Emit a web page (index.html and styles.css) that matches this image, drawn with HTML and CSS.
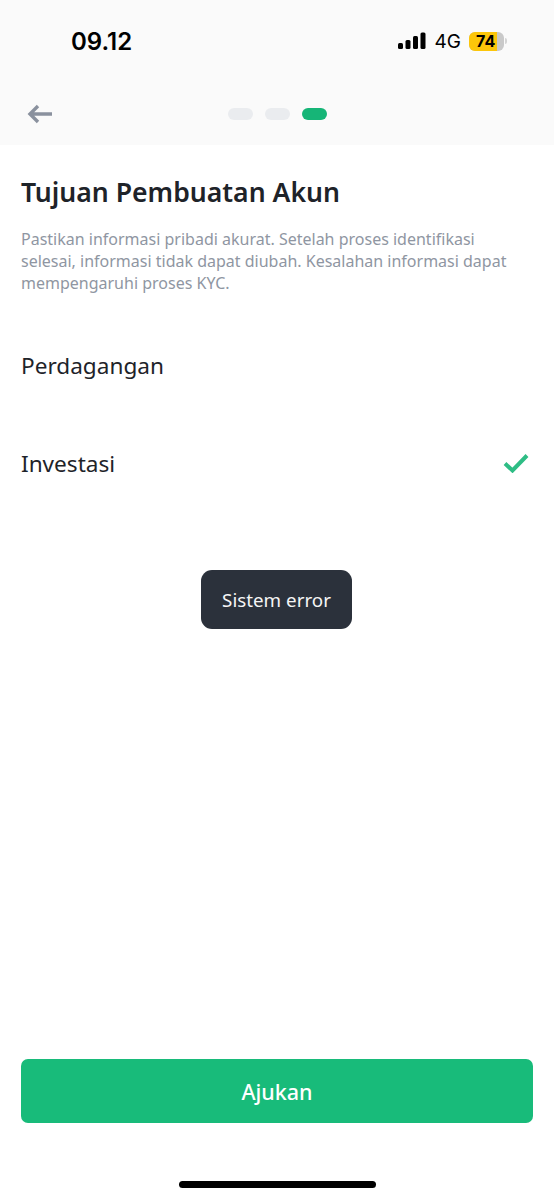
FILE: index.html
```html
<!DOCTYPE html>
<html>
<head>
    <title>Tujuan Pembuatan Akun</title>
    <link rel="stylesheet" href="styles.css">
</head>
<body>
    <div class="screen">
        <header class="top">
            <div class="status-bar">
                <span class="time">09.12</span>
                <div class="status-icons">
                    <svg class="signal" width="28" height="18" viewBox="0 0 28 18">
                        <rect x="0" y="11" width="5" height="6" rx="1.5"/>
                        <rect x="7.5" y="8" width="5" height="9" rx="1.5"/>
                        <rect x="15" y="4" width="5" height="13" rx="1.5"/>
                        <rect x="22.5" y="0.5" width="5" height="16.5" rx="1.5"/>
                    </svg>
                    <span class="network">4G</span>
                    <div class="battery">
                        <span class="battery-level">74</span>
                    </div>
                    <span class="battery-cap"></span>
                </div>
            </div>
            <nav class="nav-bar">
                <svg class="back" width="26" height="20" viewBox="0 0 26 20">
                    <path d="M25 10H3M11 2l-8 8 8 8" fill="none" stroke="#8a919e" stroke-width="3.4"/>
                </svg>
                <div class="steps">
                    <span class="step"></span>
                    <span class="step"></span>
                    <span class="step active"></span>
                </div>
            </nav>
        </header>
        <main class="content">
            <h1>Tujuan Pembuatan Akun</h1>
            <p class="intro">Pastikan informasi pribadi akurat. Setelah proses identifikasi selesai, informasi tidak dapat diubah. Kesalahan informasi dapat mempengaruhi proses KYC.</p>
            <div class="options">
                <div class="option">Perdagangan</div>
                <div class="option">
                    Investasi
                    <svg width="26" height="20" viewBox="0 0 26 20">
                        <path d="M2 10.500l7.500 7L24 2.500" fill="none" stroke="#2ebd85" stroke-width="4"/>
                    </svg>
                </div>
            </div>
        </main>
        <footer class="bottom">
            <button class="submit">Ajukan</button>
            <div class="home-bar"></div>
        </footer>
        <div class="toast">Sistem error</div>
    </div>
</body>
</html>
```

FILE: styles.css
```css
body {
    margin: 0;
    background-color: #fff;
    font-family: "Noto Sans", sans-serif;
    color: #1e2329;
}
.screen {
    position: relative;
    display: flex;
    flex-direction: column;
    height: 1200px;
    overflow: hidden;
}
.top {
    height: 145px;
    background-color: #fafafa;
}
.status-bar {
    display: flex;
    justify-content: space-between;
    align-items: center;
    height: 82px;
    padding: 0 47px 0 71px;
}
.time {
    font-family: Inter, sans-serif;
    font-size: 24px;
    font-weight: 600;
    color: #000;
}
.status-icons {
    display: flex;
    align-items: center;
}
.signal {
    fill: #000;
    margin-right: 9px;
}
.network {
    font-family: Inter, sans-serif;
    font-size: 19px;
    font-weight: 400;
    color: #000;
    margin-right: 8px;
}
.battery {
    width: 35px;
    height: 19px;
    border-radius: 6px;
    overflow: hidden;
    background-color: #c9c9c9;
}
.battery-level {
    display: block;
    width: 28px;
    height: 19px;
    padding-left: 7px;
    box-sizing: border-box;
    background-color: #fcc60a;
    font-family: Inter, sans-serif;
    font-size: 16px;
    font-weight: 700;
    line-height: 19px;
    white-space: nowrap;
    color: #000;
}
.battery-cap {
    width: 2px;
    height: 6px;
    margin-left: 1px;
    border-radius: 0 2px 2px 0;
    background-color: #d4d4d4;
}
.nav-bar {
    position: relative;
    display: flex;
    justify-content: center;
    align-items: center;
    height: 63px;
}
.back {
    position: absolute;
    left: 27px;
    top: 22px;
}
.steps {
    display: flex;
    gap: 12px;
    margin-top: 1px;
}
.step {
    width: 25px;
    height: 12px;
    border-radius: 6px;
    background-color: #eaecef;
}
.step.active {
    background-color: #16b577;
}
.content {
    flex: 1;
    padding: 0 21px;
}
h1 {
    margin: 27px 0 0;
    font-size: 26.6px;
    font-weight: 600;
    line-height: 40px;
    color: #1e2329;
}
.intro {
    margin: 16px 0 0;
    font-size: 16px;
    line-height: 22px;
    color: #8f96a2;
}
.options {
    margin-top: 22px;
}
.option {
    display: flex;
    justify-content: space-between;
    align-items: center;
    height: 98px;
    padding-right: 4px;
    font-size: 22.6px;
    color: #1e2329;
}
.bottom {
    padding: 0 21px;
    height: 141px;
}
.submit {
    display: block;
    width: 100%;
    height: 64px;
    border: none;
    border-radius: 7px;
    background-color: #18bb7a;
    font-family: "Noto Sans", sans-serif;
    font-size: 21.5px;
    font-weight: 500;
    color: #fff;
}
.home-bar {
    width: 197px;
    height: 7px;
    margin: 58px auto 0;
    border-radius: 4px;
    background-color: #000;
}
.toast {
    position: absolute;
    left: 201px;
    top: 570px;
    width: 151px;
    height: 59px;
    padding-top: 2px;
    box-sizing: border-box;
    border-radius: 11px;
    background-color: #2b313b;
    color: #f5f5f5;
    font-size: 18.8px;
    line-height: 57px;
    text-align: center;
}
```
